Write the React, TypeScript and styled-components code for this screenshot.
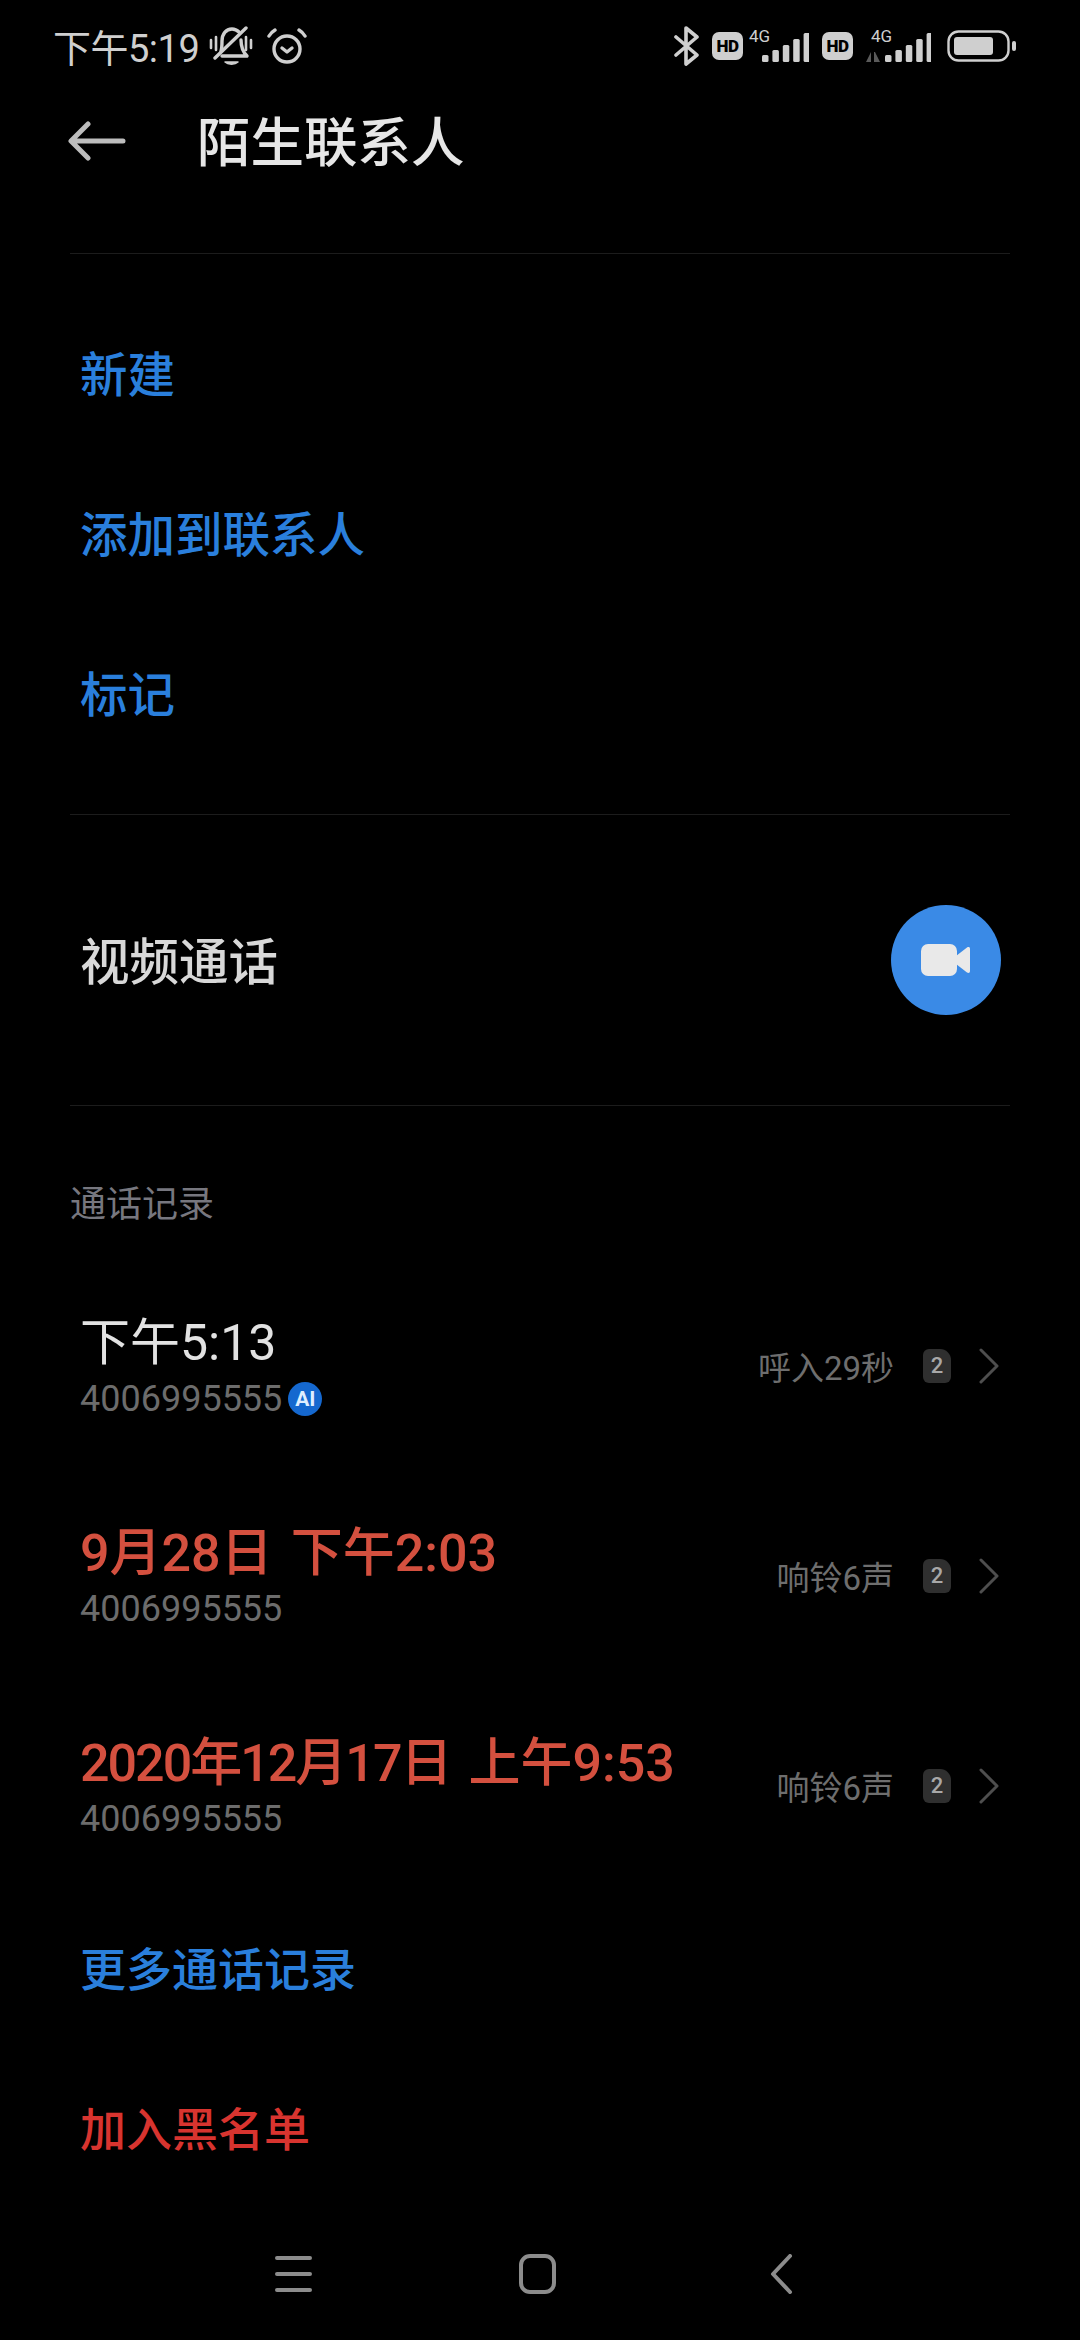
import React from 'react';
import styled, { createGlobalStyle } from 'styled-components';

const FONT = `Roboto, "Noto Sans CJK SC", "Noto Sans", sans-serif`;

const GlobalStyle = createGlobalStyle`
  html, body {
    margin: 0;
    padding: 0;
    background: #000;
  }
  * {
    box-sizing: border-box;
  }
`;

const Page = styled.div`
  width: 1080px;
  height: 2340px;
  background: #000;
  font-family: ${FONT};
  display: flex;
  flex-direction: column;
  overflow: hidden;
`;

const StatusBar = styled.div`
  height: 92px;
  padding: 0 63px 0 53px;
  display: flex;
  align-items: center;
  justify-content: space-between;
  color: #cfcfcf;
`;

const StatusGroup = styled.div`
  display: flex;
  align-items: center;
`;

const Clock = styled.span`
  font-size: 38px;
  letter-spacing: -0.5px;
  margin: 0 10px 2px 0;
`;

const Spacer = styled.span<{ $width: number }>`
  width: ${p => p.$width}px;
`;

const Header = styled.header`
  height: 98px;
  padding-left: 68px;
  display: flex;
  align-items: center;
`;

const Title = styled.h1`
  margin: 0 0 6px 71px;
  font-size: 53.5px;
  font-weight: 500;
  color: #e6e6e6;
`;

const Divider = styled.div<{ $top: number; $bottom: number }>`
  height: 1px;
  margin: ${p => p.$top}px 70px ${p => p.$bottom}px;
  background: #1c1c1c;
`;

const ActionRow = styled.div<{ $red?: boolean; $size?: number }>`
  height: 160px;
  padding: 0 0 2px 80px;
  display: flex;
  align-items: center;
  font-size: ${p => p.$size ?? 47.5}px;
  font-weight: 500;
  color: ${p => (p.$red ? '#d8342f' : '#2a7fdc')};
`;

const VideoRow = styled.div`
  height: 112px;
  padding: 0 79px 0 80px;
  display: flex;
  align-items: center;
  justify-content: space-between;
`;

const VideoLabel = styled.span`
  margin-bottom: 4px;
  font-size: 49.5px;
  font-weight: 500;
  color: #d8d8d8;
`;

const VideoButton = styled.div`
  width: 110px;
  height: 110px;
  border-radius: 50%;
  background: #3a8ae6;
  display: flex;
  align-items: center;
  justify-content: center;
`;

const SectionLabel = styled.div`
  padding-left: 70px;
  font-size: 36px;
  line-height: 48px;
  color: #77777f;
`;

const CallList = styled.div`
  display: flex;
  flex-direction: column;
  padding-top: 72px;
  gap: 81px;
`;

const CallRow = styled.div`
  height: 129px;
  padding: 0 81px 0 80px;
  display: flex;
  align-items: center;
  justify-content: space-between;
`;

const CallInfo = styled.div`
  display: flex;
  flex-direction: column;
`;

const CallTime = styled.div<{ $missed?: boolean }>`
  font-size: ${p => (p.$missed ? 52 : 50)}px;
  line-height: 67px;
  font-weight: ${p => (p.$missed ? 500 : 400)};
  color: ${p => (p.$missed ? '#d4503f' : '#e2e2e2')};
  white-space: nowrap;
`;

const CallDate = styled.span<{ $tight?: boolean }>`
  margin-right: 18px;
  letter-spacing: ${p => (p.$tight ? -2 : 0)}px;
`;

const CallNumber = styled.div`
  display: flex;
  align-items: center;
  gap: 6px;
  font-size: 36px;
  line-height: 44px;
  color: #6c6c6c;
`;

const AiBadge = styled.span`
  width: 34px;
  height: 34px;
  border-radius: 50%;
  background: #1568cf;
  color: #dfeeff;
  font-size: 21px;
  font-weight: 700;
  display: flex;
  align-items: center;
  justify-content: center;
`;

const CallMeta = styled.div`
  display: flex;
  align-items: center;
  color: #6e6e6e;
  font-size: 33px;
`;

const SimBadge = styled.span`
  width: 28px;
  height: 34px;
  margin: 0 28px 0 29px;
  border-radius: 6px 11px 6px 6px;
  background: #2f2f2f;
  color: #a8a8a8;
  font-size: 22px;
  font-weight: 500;
  display: flex;
  align-items: center;
  justify-content: center;
`;

const MoreSection = styled.div`
  margin-top: 37px;
  display: flex;
  flex-direction: column;
`;

const NavBar = styled.nav`
  margin-top: auto;
  height: 132px;
  padding-right: 4px;
  display: flex;
  align-items: center;
  justify-content: center;
`;

const NavSlot = styled.div`
  width: 244px;
  display: flex;
  justify-content: center;
`;

const HdBadge = styled.span`
  width: 31px;
  height: 28px;
  border-radius: 7px;
  background: #cfcfcf;
  color: #000;
  font-size: 17px;
  font-weight: 900;
  letter-spacing: -0.5px;
  display: flex;
  align-items: center;
  justify-content: center;
`;

const Signal = styled.span<{ $arrows?: boolean }>`
  position: relative;
  width: ${p => (p.$arrows ? 66 : 60)}px;
  height: 38px;
  margin-left: ${p => (p.$arrows ? 12 : 6)}px;
  display: block;
`;

const SignalLabel = styled.span<{ $left: number }>`
  position: absolute;
  top: -1px;
  left: ${p => p.$left}px;
  font-size: 17px;
  color: #cfcfcf;
`;

const BackArrow = () => (
  <svg width="58" height="40" viewBox="0 0 58 40" fill="none" stroke="#bdbdbd" strokeWidth="5" strokeLinecap="round" strokeLinejoin="round">
    <path d="M55 20H4M20 3 3 20l17 17" />
  </svg>
);

const BellOff = () => (
  <svg width="44" height="40" viewBox="0 0 44 40" fill="none" stroke="#cfcfcf" strokeWidth="3.4" strokeLinecap="round" strokeLinejoin="round">
    <path d="M12 25c1-3 1-6 1-10 0-7 4-12 10-12 3 0 5 1 7 3" />
    <path d="M32 14c0 7 2 12 6 16H13" />
    <path d="M6 32 37 2" />
    <path d="M16 36c3 3 10 3 13 0z" fill="#cfcfcf" strokeWidth="1.5" />
    <path d="M2 14v8M7 11v13M37 11v13M42 14v8" strokeWidth="2.6" />
  </svg>
);

const Alarm = () => (
  <svg width="40" height="36" viewBox="0 0 40 36" fill="none" stroke="#cfcfcf" strokeWidth="3.4" strokeLinecap="round" strokeLinejoin="round">
    <circle cx="20" cy="21" r="13" />
    <path d="M2 8c1.500-2.500 3.500-4.500 6-6M38 8c-1.500-2.500-3.500-4.500-6-6" />
    <path d="m15 20 5 4 5-4" />
  </svg>
);

const Bluetooth = () => (
  <svg width="26" height="40" viewBox="0 0 26 40" fill="none" stroke="#cfcfcf" strokeWidth="3.6" strokeLinecap="round" strokeLinejoin="round">
    <path d="m2 11 21 18-11 9V2l11 9L2 29" />
  </svg>
);

const SignalBars = ({ arrows }: { arrows?: boolean }) => {
  const width = arrows ? 66 : 60;
  const start = arrows ? 20 : 13;
  const bars = [7, 12, 17, 23, 29];
  return (
    <Signal $arrows={arrows}>
      <svg width={width} height="38" viewBox={`0 0 ${width} 38`}>
        {arrows && <path d="M6 25v10H1zM9 35V25h1l5 10z" fill="#5a5a5a" />}
        {bars.map((h, i) => (
          <rect key={i} x={start + i * 10.4} y={35 - h} width="6.500" height={h} rx="1.500" fill="#cfcfcf" />
        ))}
      </svg>
      <SignalLabel $left={arrows ? 6 : 0}>4G</SignalLabel>
    </Signal>
  );
};

const Battery = () => (
  <svg width="70" height="32" viewBox="0 0 70 32" fill="none">
    <rect x="1.500" y="1.500" width="60" height="29" rx="10" stroke="#cfcfcf" strokeWidth="2.400" />
    <rect x="7" y="7" width="39" height="18" rx="3" fill="#cfcfcf" />
    <rect x="65" y="11" width="4" height="10" rx="2" fill="#cfcfcf" />
  </svg>
);

const VideoIcon = () => (
  <svg width="50" height="32" viewBox="0 0 50 32" fill="#e9e9e9">
    <rect x="0" y="0" width="36" height="32" rx="7" />
    <path d="M35 12 46 3.500c1.500-1 3-.5 3 1.500v22c0 2-1.500 2.500-3 1.500L35 20z" />
  </svg>
);

const Chevron = () => (
  <svg width="20" height="36" viewBox="0 0 20 36" fill="none" stroke="#4e4e4e" strokeWidth="3" strokeLinecap="round" strokeLinejoin="round">
    <path d="m2 2 16 16L2 34" />
  </svg>
);

const MenuIcon = () => (
  <svg width="40" height="40" viewBox="0 0 40 40" fill="none" stroke="#8c8c8c" strokeWidth="4" strokeLinecap="round">
    <path d="M3 4h33M3 20h33M3 36h33" />
  </svg>
);

const HomeIcon = () => (
  <svg width="40" height="40" viewBox="0 0 40 40" fill="none" stroke="#8c8c8c" strokeWidth="4">
    <rect x="3" y="2" width="33" height="36" rx="9" />
  </svg>
);

const NavBackIcon = () => (
  <svg width="24" height="40" viewBox="0 0 24 40" fill="none" stroke="#8c8c8c" strokeWidth="4" strokeLinecap="round" strokeLinejoin="round">
    <path d="M20 2 3 20l17 18" />
  </svg>
);

const calls = [
  { date: '', time: '下午5:13', meta: '呼入29秒', ai: true, missed: false, tight: false },
  { date: '9月28日', time: '下午2:03', meta: '响铃6声', ai: false, missed: true, tight: false },
  { date: '2020年12月17日', time: '上午9:53', meta: '响铃6声', ai: false, missed: true, tight: true },
];

const App = (): JSX.Element => (
  <Page>
    <GlobalStyle />
    <StatusBar>
      <StatusGroup>
        <Clock>下午5:19</Clock>
        <BellOff />
        <Spacer $width={14} />
        <Alarm />
      </StatusGroup>
      <StatusGroup>
        <Bluetooth />
        <Spacer $width={12} />
        <HdBadge>HD</HdBadge>
        <SignalBars />
        <Spacer $width={13} />
        <HdBadge>HD</HdBadge>
        <SignalBars arrows />
        <Spacer $width={16} />
        <Battery />
      </StatusGroup>
    </StatusBar>
    <Header>
      <BackArrow />
      <Title>陌生联系人</Title>
    </Header>
    <Divider $top={63} $bottom={38} />
    <ActionRow>新建</ActionRow>
    <ActionRow>添加到联系人</ActionRow>
    <ActionRow>标记</ActionRow>
    <Divider $top={42} $bottom={89} />
    <VideoRow>
      <VideoLabel>视频通话</VideoLabel>
      <VideoButton>
        <VideoIcon />
      </VideoButton>
    </VideoRow>
    <Divider $top={89} $bottom={75} />
    <SectionLabel>通话记录</SectionLabel>
    <CallList>
      {calls.map(call => (
        <CallRow key={call.time}>
          <CallInfo>
            <CallTime $missed={call.missed}>
              {call.date && <CallDate $tight={call.tight}>{call.date}</CallDate>}
              {call.time}
            </CallTime>
            <CallNumber>
              4006995555
              {call.ai && <AiBadge>AI</AiBadge>}
            </CallNumber>
          </CallInfo>
          <CallMeta>
            {call.meta}
            <SimBadge>2</SimBadge>
            <Chevron />
          </CallMeta>
        </CallRow>
      ))}
    </CallList>
    <MoreSection>
      <ActionRow $size={46}>更多通话记录</ActionRow>
      <ActionRow $red $size={46}>加入黑名单</ActionRow>
    </MoreSection>
    <NavBar>
      <NavSlot><MenuIcon /></NavSlot>
      <NavSlot><HomeIcon /></NavSlot>
      <NavSlot><NavBackIcon /></NavSlot>
    </NavBar>
  </Page>
);

export default App;
